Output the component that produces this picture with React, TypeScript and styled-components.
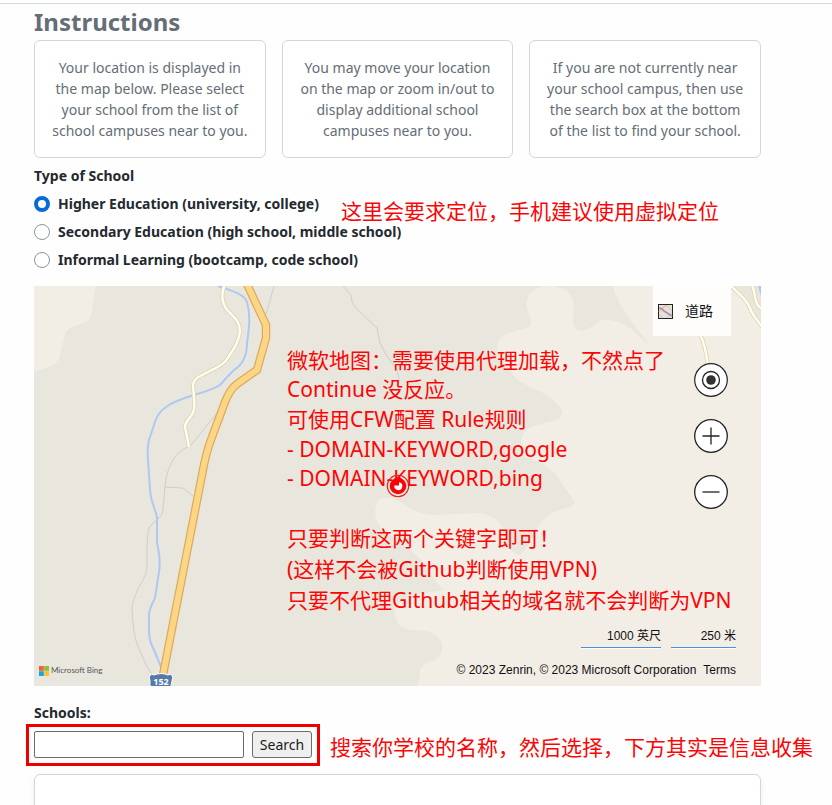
import React, { useState } from "react";
import styled, { createGlobalStyle } from "styled-components";

const GlobalStyle = createGlobalStyle`
  *, *::before, *::after { box-sizing: border-box; }
  body {
    margin: 0;
    background: #fefefe;
    color: #24292f;
    font-family: "Noto Sans", "Noto Sans CJK SC", sans-serif;
    font-size: 14px;
    line-height: 21px;
    overflow-x: hidden;
  }
`;

const Divider = styled.header`
  height: 4px;
  border-bottom: 1px solid #d0d7de;
`;

const Page = styled.main`
  height: calc(100vh - 4px);
  overflow: hidden;
  padding: 0 71px 0 34px;
`;

const Title = styled.h2`
  margin: 0;
  color: #656d76;
  font-size: 24px;
  line-height: 36px;
  font-weight: 700;
`;

const Cards = styled.div`
  display: grid;
  grid-template-columns: repeat(3, 1fr);
  gap: 16px;
`;

const Card = styled.p`
  margin: 0;
  padding: 16px;
  border: 1px solid #d0d7de;
  border-radius: 6px;
  background: #fff;
  color: #656d76;
  text-align: center;
`;

const SchoolTypes = styled.fieldset`
  position: relative;
  display: flex;
  flex-direction: column;
  gap: 7px;
  min-width: 0;
  margin: 0;
  padding: 0;
  border: 0;
  font-weight: 700;
`;

const Legend = styled.legend`
  padding: 7px 0;
`;

const RadioLabel = styled.label`
  display: flex;
  align-items: center;
  gap: 8px;
`;

const Radio = styled.input`
  appearance: none;
  width: 16px;
  height: 16px;
  margin: 0;
  border: 1px solid #8c959f;
  border-radius: 50%;
  background: #fff;

  &:checked {
    border: 4px solid #0969da;
  }
`;

const Annotation = styled.div<{ $left: number; $top: number }>`
  position: absolute;
  left: ${(p) => p.$left}px;
  top: ${(p) => p.$top}px;
  color: #fb0505;
  font-size: 21px;
  font-weight: 400;
  line-height: normal;
  white-space: nowrap;
  pointer-events: none;
`;

const NoteLine = styled.div<{ $height: number }>`
  height: ${(p) => p.$height}px;
  font-family: "Noto Sans", "Noto Sans CJK SC", sans-serif;
  line-height: ${(p) => p.$height}px;
`;

const MapFrame = styled.section`
  position: relative;
  height: 400px;
  margin: 16px 0;
  overflow: hidden;
  background: #e9e6de;
  color: #111;
  font-family: "Liberation Sans", "Noto Sans CJK SC", sans-serif;
`;

const MapCanvas = styled.svg`
  display: block;
  width: 100%;
  height: 100%;
`;

const Pin = styled.svg`
  position: absolute;
  left: calc(50% - 12px);
  top: calc(50% - 12px);
`;

const LayerButton = styled.button`
  position: absolute;
  top: 0;
  right: 30px;
  display: flex;
  align-items: center;
  gap: 12px;
  width: 78px;
  height: 50px;
  padding: 0 5px;
  border: 0;
  background: rgba(255, 255, 255, 0.88);
  color: #111;
  font: 14px/20px "Liberation Sans", "Noto Sans CJK SC", sans-serif;
`;

const MapControls = styled.div`
  position: absolute;
  top: 77px;
  right: 33px;
  display: flex;
  flex-direction: column;
  gap: 22px;
`;

const RoundButton = styled.button`
  display: block;
  width: 34px;
  height: 34px;
  padding: 0;
  border: 0;
  border-radius: 50%;
  background: #fff;

  svg { display: block; }
`;

const Scales = styled.div`
  position: absolute;
  right: 25px;
  bottom: 38px;
  display: flex;
  gap: 10px;
  font-size: 12px;
  line-height: 21px;
`;

const Scale = styled.span<{ $width: number }>`
  width: ${(p) => p.$width}px;
  border-bottom: 1px solid #4494dc;
  box-shadow: 0 1px 0 rgba(255, 255, 255, 0.7);
  text-align: right;
  white-space: nowrap;
`;

const Credits = styled.div`
  position: absolute;
  right: 25px;
  bottom: 8px;
  display: flex;
  gap: 7px;
  font-size: 12px;
  line-height: 16px;
  white-space: nowrap;
`;

const TermsLink = styled.a`
  color: inherit;
  text-decoration: none;
`;

const Brand = styled.div`
  position: absolute;
  left: 5px;
  bottom: 10px;
  display: flex;
  align-items: center;
  gap: 2px;
  color: #555;
  font: 8px/11px Lato, sans-serif;
  white-space: nowrap;
`;

const SearchLabel = styled.label`
  display: block;
  margin-bottom: 8px;
  font-weight: 700;
`;

const SearchForm = styled.form`
  position: relative;
  display: flex;
  gap: 8px;
`;

const Highlight = styled.span`
  position: absolute;
  inset: -7px auto -8px -8px;
  width: 294px;
  border: 3px solid #ee0000;
  pointer-events: none;
`;

const SearchInput = styled.input`
  width: 210px;
  height: 27px;
  padding: 1px 4px;
  border: 1px solid #6b6b6b;
  border-radius: 2px;
  background: #fff;
  font: inherit;
`;

const SearchButton = styled.button`
  width: 60px;
  height: 27px;
  padding: 0;
  border: 1px solid #6b6b6b;
  border-radius: 3px;
  background: #efefef;
  color: #1a1a1a;
  font: inherit;
`;

const Results = styled.section`
  height: 160px;
  margin-top: 16px;
  border: 1px solid #d0d7de;
  border-radius: 6px;
  background: #fff;
  box-shadow: 0 3px 6px rgba(140, 149, 159, 0.15);
`;

const instructions = [
  "Your location is displayed in the map below. Please select your school from the list of school campuses near to you.",
  "You may move your location on the map or zoom in/out to display additional school campuses near to you.",
  "If you are not currently near your school campus, then use the search box at the bottom of the list to find your school.",
];

const schoolTypes = [
  "Higher Education (university, college)",
  "Secondary Education (high school, middle school)",
  "Informal Learning (bootcamp, code school)",
];

const mapNotes = [
  { text: "微软地图：需要使用代理加载，不然点了", height: 30 },
  { text: "Continue 没反应。", height: 29 },
  { text: "可使用CFW配置 Rule规则", height: 31 },
  { text: "- DOMAIN-KEYWORD,google", height: 29 },
  { text: "- DOMAIN-KEYWORD,bing", height: 29 },
  { text: "", height: 30 },
  { text: "只要判断这两个关键字即可！", height: 31 },
  { text: "(这样不会被Github判断使用VPN)", height: 31 },
  { text: "只要不代理Github相关的域名就不会判断为VPN", height: 31 },
];

const highway =
  "M212 -4 L232 39 V52 L223 84 L203 98 Q196 103 191 116 L178 151 Q172 166 168 189 L129 389 L127 402";
const localRoad =
  "M191 -2 C186 10 188 18 194 25 C201 32 206 36 206 45 C205 57 198 65 193 73 C189 80 181 82 174 86 C166 90 159 92 159 101 C160 109 161 117 160 123 C159 131 151 134 151 141 L155 161";
const eastRoads =
  "M695 -3 C702 7 711 10 716 22 C719 31 724 34 730 44 M717 -3 C723 7 718 17 729 24 M665 46 Q672 59 674 82";

function MapDrawing() {
  return (
    <MapCanvas viewBox="0 0 727 400" preserveAspectRatio="xMidYMid slice" aria-hidden="true">
      <rect width="727" height="400" fill="#e9e6de" />
      <g fill="#f2ede5">
        <path d="M0 0 H62 L59 18 Q57 36 52 36 L44 39 Q33 41 31 48 L25 73 Q23 77 17 80 Q8 84 0 85 Z" />
        <path d="M579 0 C584 22 600 38 618 62 Q609 53 596 42 Q572 27 560 39 Q548 48 542 43 C536 36 541 25 539 14 C533 -4 501 -4 494 11 Q490 22 497 32 Q499 40 490 43 C476 45 463 51 463 60 C464 72 472 80 480 90 C485 98 500 101 509 107 Q524 117 528 124 Q530 131 520 135 Q506 137 493 143 Q483 154 489 170 C504 176 517 180 524 192 Q534 207 541 216 Q541 221 528 223 C516 226 507 234 503 244 Q495 259 486 269 C477 269 469 255 469 247 C470 235 454 227 443 227 L400 229 Q381 227 371 219 C359 211 346 207 342 219 C339 230 344 240 353 247 Q370 259 381 268 Q391 276 399 291 L409 304 C397 306 365 310 361 324 C359 337 369 344 380 344 Q402 344 408 357 Q410 367 401 374 Q390 376 386 384 L384 400 H727 V0 Z" />
      </g>
      <path d="M695 0 Q713 8 719 29 L727 42 V0 Z" fill="#e9e6de" />
      <path d="M724 0 H727 V10 Q725 4 724 0 Z" fill="#a9c9f4" />
      <g fill="none" stroke="#cfcec9" strokeWidth="1">
        <path d="M240 0 L232 29" />
        <path d="M183 127 L158 158 Q145 165 141 171 Q133 182 131 199 L129 224 Q128 231 123 233 L115 242 Q113 250 113 267 Q114 285 110 292 Q99 310 98 322 Q99 347 103 358 L113 381 L120 391" />
        <path d="M131 201 L149 202 L159 210" />
        <path d="M309 0 L317 9 Q317 17 322 22 L343 42 L346 57 Q351 69 358 77 Q366 87 365 97" />
      </g>
      <path
        d="M184 0 C194 4 210 7 213 16 C217 30 215 43 213 57 Q213 76 200 84 Q192 92 186 99 C172 108 147 110 132 121 Q123 127 120 139 L115 154 Q113 162 114 174 L116 204 C117 218 122 223 123 232 V257 Q127 274 125 286 L121 312 Q114 325 115 333 V345 Q115 355 120 364 L130 388"
        fill="none"
        stroke="#adc9f3"
        strokeWidth="2"
      />
      <g fill="none" strokeLinejoin="round">
        <path d={localRoad} stroke="#ddd4ac" strokeWidth="4" />
        <path d={localRoad} stroke="#fffef2" strokeWidth="2.4" />
        <path d={eastRoads} stroke="#ded5ad" strokeWidth="4" />
        <path d={eastRoads} stroke="#fffef2" strokeWidth="2.4" />
        <path d={highway} stroke="#dda957" strokeWidth="8.4" strokeLinejoin="miter" />
        <path d={highway} stroke="#fbd687" strokeWidth="6" strokeLinejoin="miter" />
      </g>
      <path
        d="M117 388 Q120 390 123 388 Q127 387 131 388 Q134 390 137 388 Q140 391 138 395 Q138 402 132 408 H121 Q115 402 116 395 Q114 391 117 388 Z"
        fill="#557ba6"
        stroke="#fff"
        strokeWidth="1"
      />
      <text x="127" y="399" textAnchor="middle" fontSize="9" fontWeight="700" fill="#fff" fontFamily="Noto Sans, sans-serif">
        152
      </text>
    </MapCanvas>
  );
}

function MapButtons() {
  return (
    <MapControls>
      <RoundButton type="button" aria-label="Locate me">
        <svg width="34" height="34" viewBox="0 0 34 34" fill="none" stroke="#222">
          <circle cx="17" cy="17" r="16.3" strokeWidth="1.2" />
          <circle cx="17" cy="17" r="8.5" strokeWidth="1.3" />
          <circle cx="17" cy="17" r="4.8" fill="#333" stroke="none" />
        </svg>
      </RoundButton>
      <RoundButton type="button" aria-label="Zoom in">
        <svg width="34" height="34" viewBox="0 0 34 34" fill="none" stroke="#222" strokeWidth="1.3">
          <circle cx="17" cy="17" r="16.3" />
          <path d="M8.5 17 H25.5 M17 8.5 V25.5" />
        </svg>
      </RoundButton>
      <RoundButton type="button" aria-label="Zoom out">
        <svg width="34" height="34" viewBox="0 0 34 34" fill="none" stroke="#222" strokeWidth="1.3">
          <circle cx="17" cy="17" r="16.3" />
          <path d="M8.5 17 H25.5" />
        </svg>
      </RoundButton>
    </MapControls>
  );
}

export default function App() {
  const [type, setType] = useState(0);
  const [query, setQuery] = useState("");

  return (
    <>
      <GlobalStyle />
      <Divider />
      <Page>
        <Title>Instructions</Title>
        <Cards>
          {instructions.map((text) => (
            <Card key={text}>{text}</Card>
          ))}
        </Cards>

        <SchoolTypes>
          <Legend>Type of School</Legend>
          {schoolTypes.map((name, i) => (
            <RadioLabel key={name}>
              <Radio type="radio" name="school-type" checked={type === i} onChange={() => setType(i)} />
              {name}
            </RadioLabel>
          ))}
          <Annotation $left={307} $top={2}>这里会要求定位，手机建议使用虚拟定位</Annotation>
        </SchoolTypes>

        <MapFrame aria-label="Map">
          <MapDrawing />
          <LayerButton type="button">
            <svg width="15" height="15" viewBox="0 0 15 15" fill="none">
              <rect x="0.5" y="0.5" width="14" height="14" fill="#e6e1da" stroke="#222" />
              <path d="M8 1 L14 7 M1 11 L5 14 M9 14 L14 9" stroke="#c9c3bb" />
              <path d="M1 8 Q4 4 8 1.5" stroke="#eebf83" strokeWidth="1.4" />
              <path d="M1 4 Q4 4 6 7 Q9 9 14 12" stroke="#a98fbb" strokeWidth="1.6" />
            </svg>
            道路
          </LayerButton>
          <MapButtons />
          <Scales>
            <Scale $width={80}>1000 英尺</Scale>
            <Scale $width={65}>250 米</Scale>
          </Scales>
          <Credits>
            <span>© 2023 Zenrin, © 2023 Microsoft Corporation</span>
            <TermsLink href="#terms">Terms</TermsLink>
          </Credits>
          <Brand>
            <svg width="10" height="10" viewBox="0 0 10 10">
              <rect width="4.8" height="4.8" fill="#ef6236" />
              <rect x="5.2" width="4.8" height="4.8" fill="#8cbf35" />
              <rect y="5.2" width="4.8" height="4.8" fill="#18a5e5" />
              <rect x="5.2" y="5.2" width="4.8" height="4.8" fill="#fbc02d" />
            </svg>
            Microsoft Bing
          </Brand>
          <Annotation $left={253} $top={59} lang="zh-CN">
            {mapNotes.map((note, i) => (
              <NoteLine key={i} $height={note.height}>
                {note.text}
              </NoteLine>
            ))}
          </Annotation>
          <Pin width="24" height="24" viewBox="0 0 24 24" aria-hidden="true">
            <circle cx="12" cy="12" r="10.7" fill="none" stroke="#e21b1b" strokeWidth="1.1" />
            <circle cx="12" cy="12" r="8.3" fill="#fa0505" />
            <path d="M13 8.2 V11.5 H8.4 A4 4 0 1 0 13 8.2 Z" fill="#fff" />
          </Pin>
        </MapFrame>

        <SearchLabel htmlFor="school-search">Schools:</SearchLabel>
        <SearchForm onSubmit={(e) => e.preventDefault()}>
          <SearchInput
            id="school-search"
            type="text"
            value={query}
            onChange={(e) => setQuery(e.target.value)}
          />
          <SearchButton type="submit">Search</SearchButton>
          <Highlight />
          <Annotation $left={296} $top={0}>搜索你学校的名称，然后选择，下方其实是信息收集</Annotation>
        </SearchForm>
        <Results aria-label="Schools" />
      </Page>
    </>
  );
}
